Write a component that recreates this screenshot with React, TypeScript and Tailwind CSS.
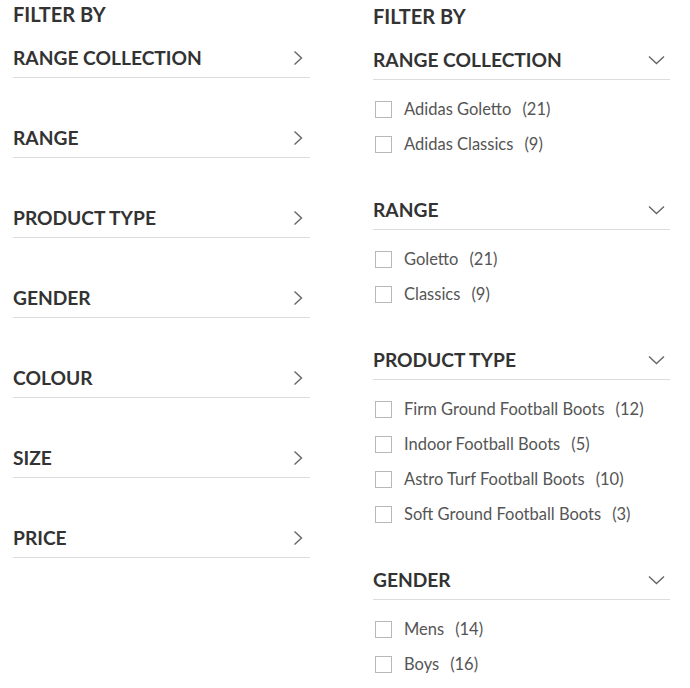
const collapsed = ['RANGE COLLECTION', 'RANGE', 'PRODUCT TYPE', 'GENDER', 'COLOUR', 'SIZE', 'PRICE']

const expanded = [
  {
    title: 'RANGE COLLECTION',
    options: [
      { label: 'Adidas Goletto', count: 21 },
      { label: 'Adidas Classics', count: 9 },
    ],
  },
  {
    title: 'RANGE',
    options: [
      { label: 'Goletto', count: 21 },
      { label: 'Classics', count: 9 },
    ],
  },
  {
    title: 'PRODUCT TYPE',
    options: [
      { label: 'Firm Ground Football Boots', count: 12 },
      { label: 'Indoor Football Boots', count: 5 },
      { label: 'Astro Turf Football Boots', count: 10 },
      { label: 'Soft Ground Football Boots', count: 3 },
    ],
  },
  {
    title: 'GENDER',
    options: [
      { label: 'Mens', count: 14 },
      { label: 'Boys', count: 16 },
    ],
  },
]

function ChevronRight() {
  return (
    <svg width="10" height="16" viewBox="0 0 10 16" fill="none" className="text-[#666]">
      <path d="M1.5 1.5 L8.5 8 L1.5 14.5" stroke="currentColor" strokeWidth="1.4" />
    </svg>
  )
}

function ChevronDown() {
  return (
    <svg width="17" height="10" viewBox="0 0 17 10" fill="none" className="text-[#666]">
      <path d="M1 1.5 L8.5 8.5 L16 1.5" stroke="currentColor" strokeWidth="1.4" />
    </svg>
  )
}

export default function App() {
  return (
    <main className="min-h-screen bg-white font-['Lato','Liberation_Sans',sans-serif] text-[#333]">
      <div className="flex gap-[63px] pl-[13px]">

        {/* 閉じた状態 */}
        <aside className="w-[297px]">
          <h2 className="text-[20px] font-bold leading-[29px] text-[#333]">FILTER BY</h2>
          <div className="mt-[10px]">
            {collapsed.map((name) => (
              <div key={name} className="mb-[41px] flex h-[39px] items-center justify-between border-b border-[#dcdcdc] pb-px">
                <span className="pt-[2px] text-[19.2px] font-bold text-[#333]">{name}</span>
                <span className="pr-[7px] pt-[1px]">
                  <ChevronRight />
                </span>
              </div>
            ))}
          </div>
        </aside>

        {/* 開いた状態 */}
        <aside className="w-[297px] pt-[2px]">
          <h2 className="text-[20px] font-bold leading-[29px] text-[#333]">FILTER BY</h2>
          <div className="mt-[10px]">
            {expanded.map((group) => (
              <section key={group.title} className="mb-[29px]">
                <div className="flex h-[39px] items-center justify-between border-b border-[#dcdcdc] pb-px">
                  <span className="pt-[2px] text-[19.2px] font-bold text-[#333]">{group.title}</span>
                  <span className="pr-[5px] pt-[1px]">
                    <ChevronDown />
                  </span>
                </div>
                <ul className="pt-[12px]">
                  {group.options.map((opt) => (
                    <li key={opt.label} className="flex h-[35px] items-center">
                      <span className="ml-[2px] h-[17px] w-[17px] border-[1.5px] border-[#b8b8b8] bg-white" />
                      <span className="ml-[12px] text-[16.5px] text-[#555]">
                        {opt.label}
                        <span className="ml-[11px]">({opt.count})</span>
                      </span>
                    </li>
                  ))}
                </ul>
              </section>
            ))}
          </div>
        </aside>

      </div>
    </main>
  )
}
